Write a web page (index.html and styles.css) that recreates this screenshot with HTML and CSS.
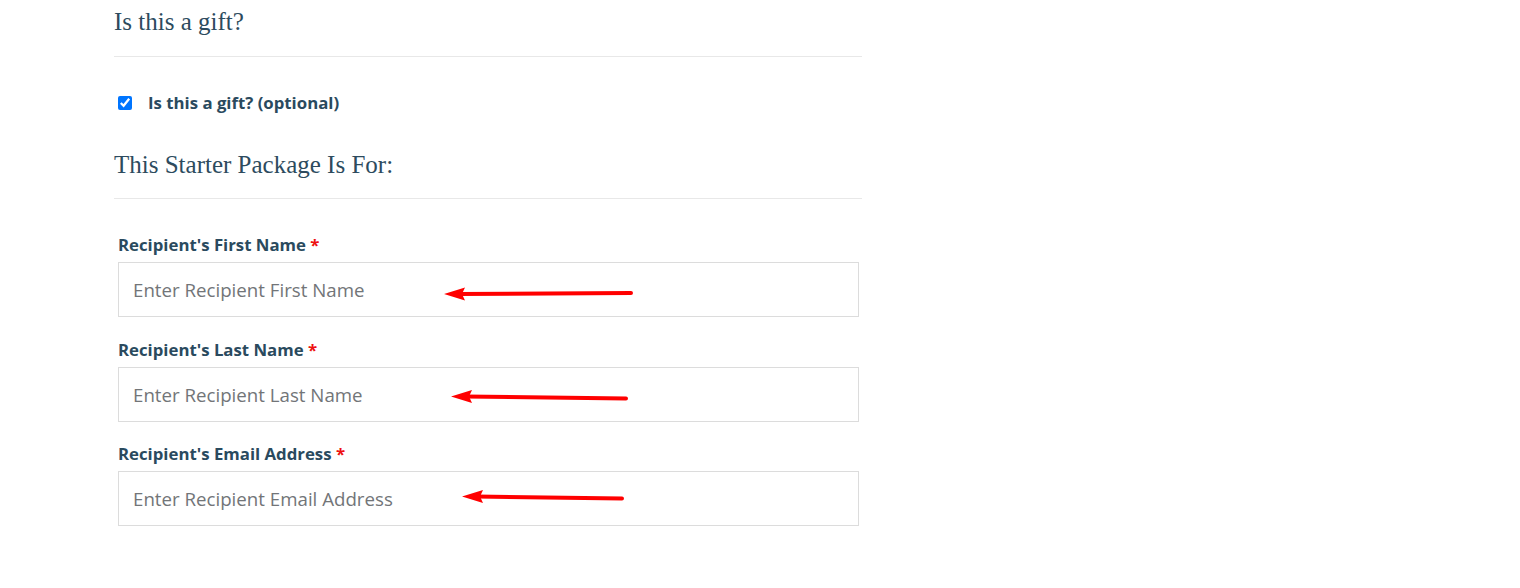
FILE: index.html
```html
<!DOCTYPE html>
<html lang="en">
<head>
  <meta charset="UTF-8">
  <meta name="viewport" content="width=device-width, initial-scale=1.0">
  <title>Gift Details</title>
  <link rel="stylesheet" href="styles.css">
</head>
<body>
  <div class="checkout-section">
    <h2 class="section-title first">Is this a gift?</h2>

    <div class="gift-row">
      <input type="checkbox" id="isGift" checked>
      <label for="isGift">Is this a gift? (optional)</label>
    </div>

    <h2 class="section-title second">This Starter Package Is For:</h2>

    <div class="recipient-fields">
      <div class="form-field">
        <label for="firstName">Recipient's First Name <span class="required">*</span></label>
        <div class="input-wrap">
          <input type="text" id="firstName" placeholder="Enter Recipient First Name">
          <svg class="arrow arrow-1" width="200" height="16" viewBox="0 0 200 16">
            <line x1="14" y1="8" x2="187" y2="7" stroke="#ff0000" stroke-width="4" stroke-linecap="round"/>
            <polygon points="0,8 21,1.5 18,8 21,14.5" fill="#ff0000"/>
          </svg>
        </div>
      </div>

      <div class="form-field">
        <label for="lastName">Recipient's Last Name <span class="required">*</span></label>
        <div class="input-wrap">
          <input type="text" id="lastName" placeholder="Enter Recipient Last Name">
          <svg class="arrow arrow-2" width="200" height="16" viewBox="0 0 200 16">
            <line x1="14" y1="6.5" x2="175" y2="8.5" stroke="#ff0000" stroke-width="4" stroke-linecap="round"/>
            <polygon points="0,6.5 21,0 18,6.5 21,13" fill="#ff0000"/>
          </svg>
        </div>
      </div>

      <div class="form-field">
        <label for="email">Recipient's Email Address <span class="required">*</span></label>
        <div class="input-wrap">
          <input type="text" id="email" placeholder="Enter Recipient Email Address">
          <svg class="arrow arrow-3" width="200" height="16" viewBox="0 0 200 16">
            <line x1="14" y1="6.5" x2="160" y2="8.5" stroke="#ff0000" stroke-width="4" stroke-linecap="round"/>
            <polygon points="0,6.5 21,0 18,6.5 21,13" fill="#ff0000"/>
          </svg>
        </div>
      </div>
    </div>
  </div>
</body>
</html>
```

FILE: styles.css
```css
body {
  margin: 0;
  padding: 0;
  background-color: #fff;
  font-family: 'Open Sans', 'Liberation Sans', sans-serif;
  color: #2a4a5e;
}

.checkout-section {
  margin-left: 114px;
  width: 748px;
}

.section-title {
  margin: 0;
  font-family: 'Liberation Serif', 'DejaVu Serif', serif;
  font-weight: normal;
  font-size: 25px;
  line-height: 36px;
  color: #2d4b5e;
  border-bottom: 1px solid #e8e8e8;
}

.section-title.first {
  padding-top: 4px;
  padding-bottom: 16px;
}

.section-title.second {
  margin-top: 34px;
  padding-bottom: 15px;
}

.gift-row {
  display: flex;
  align-items: center;
  margin-top: 36px;
  height: 20px;
}

.gift-row input {
  margin: 0 0 0 4px;
  width: 14px;
  height: 14px;
}

.gift-row label {
  margin-left: 16px;
  font-size: 16.8px;
  font-weight: bold;
  line-height: 20px;
}

.recipient-fields {
  display: flex;
  flex-direction: column;
  gap: 21.5px;
  margin-top: 35px;
}

.form-field {
  padding: 0 3px 0 4px;
}

.form-field label {
  display: block;
  font-size: 16.8px;
  font-weight: bold;
  line-height: 22px;
  margin-bottom: 6px;
}

.required {
  color: #ee1111;
}

.input-wrap {
  position: relative;
}

.input-wrap input {
  display: block;
  box-sizing: border-box;
  width: 100%;
  height: 55px;
  padding: 0 14px;
  border: 1px solid #dcdcdc;
  border-radius: 0;
  font-family: 'Open Sans', 'Liberation Sans', sans-serif;
  font-size: 18.7px;
  color: #333;
  outline: none;
}

.input-wrap input::placeholder {
  color: #727578;
}

/* red annotation arrows drawn over the inputs */
.arrow {
  position: absolute;
  pointer-events: none;
}

.arrow-1 {
  left: 326px;
  top: 24px;
}

.arrow-2 {
  left: 333px;
  top: 23px;
}

.arrow-3 {
  left: 344px;
  top: 19px;
}
```
